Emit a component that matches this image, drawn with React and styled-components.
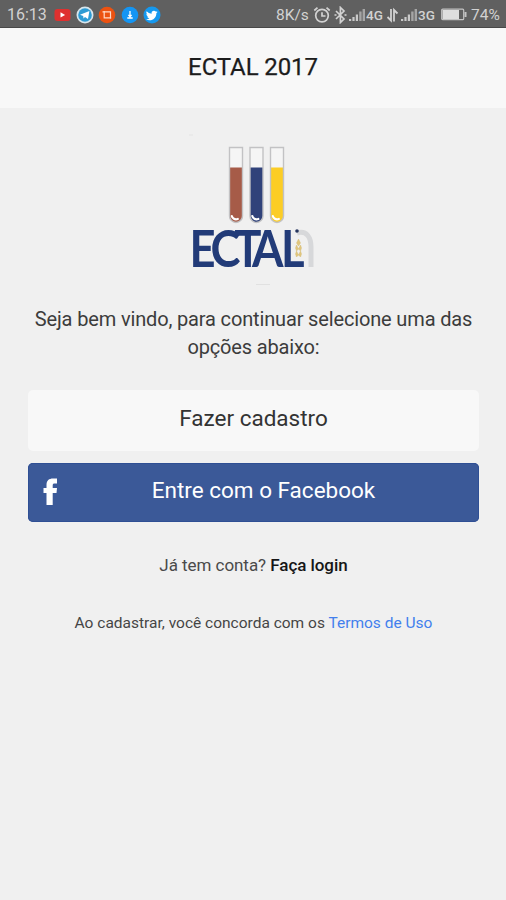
import React from 'react';
import styled, { createGlobalStyle } from 'styled-components';

const GlobalStyle = createGlobalStyle`
  * { box-sizing: border-box; }
  body { margin: 0; background: #f0f0f0; font-family: Roboto, sans-serif; }
`;

const Screen = styled.div`
  width: 506px;
  height: 900px;
  display: flex;
  flex-direction: column;
  background: #f0f0f0;
  overflow: hidden;
`;

const StatusBar = styled.div`
  height: 28px;
  flex: none;
  display: flex;
  align-items: center;
  justify-content: space-between;
  padding: 2px 6px 0 7px;
  background: #606060;
  border-bottom: 1px solid #484848;
  color: #d2d2d2;
`;

const StatusGroup = styled.div`
  display: flex;
  align-items: center;
`;

const StatusText = styled.span`
  font-size: ${(p) => p.$size || 16}px;
  line-height: 20px;
  width: ${(p) => p.$width}px;
  margin-left: ${(p) => p.$gap || 0}px;
  font-weight: ${(p) => p.$weight || 400};
  white-space: nowrap;
`;

const StatusIcon = styled.svg`
  display: block;
  flex: none;
  margin-left: ${(p) => p.$gap || 0}px;
`;

const Header = styled.header`
  height: 80px;
  flex: none;
  display: flex;
  justify-content: center;
  padding-top: 24px;
  background: #f8f8f8;
`;

const Title = styled.h1`
  margin: 0;
  font-size: 24px;
  line-height: 30px;
  font-weight: 400;
  letter-spacing: -0.1px;
  color: #1c1c1c;
  -webkit-text-stroke: 0.25px #1c1c1c;
`;

const Content = styled.main`
  display: flex;
  flex-direction: column;
  align-items: center;
  padding: 22px 27px 0 28px;
`;

const Logo = styled.svg`
  display: block;
  width: 145px;
  height: 160px;
`;

const Welcome = styled.p`
  margin: 15px 0 0;
  font-size: 20px;
  line-height: 28px;
  letter-spacing: -0.15px;
  text-align: center;
  white-space: nowrap;
  color: #3c3c3c;
`;

const Button = styled.button`
  width: 451px;
  height: ${(p) => p.$height}px;
  margin-top: ${(p) => p.$top}px;
  display: grid;
  grid-template-columns: ${(p) => p.$lead || 44}px 1fr 44px;
  align-items: center;
  padding: 0 0 5px;
  border: 0;
  border-radius: 5px;
  background: ${(p) => p.$bg};
  color: ${(p) => p.$color};
  box-shadow: ${(p) => p.$shadow || 'none'};
  font: 400 22.5px/28px Roboto, sans-serif;
`;

const ButtonLabel = styled.span`
  grid-column: 2;
  text-align: center;
`;

const FacebookIcon = styled.svg`
  grid-column: 1;
  grid-row: 1;
  display: block;
  margin: 2px 0 0 15px;
`;

const LoginLine = styled.p`
  margin: 32px 0 0;
  font-size: 17px;
  line-height: 22px;
  letter-spacing: -0.05px;
  color: #4a4a4a;
`;

const LoginLink = styled.a`
  font-weight: 500;
  color: #161616;
`;

const TermsLine = styled.p`
  margin: 37px 0 0;
  font-size: 15.5px;
  line-height: 20px;
  white-space: nowrap;
  color: #454545;
`;

const TermsLink = styled.a`
  color: #427fed;
`;

function YouTubeIcon() {
  return (
    <StatusIcon width="17" height="14" viewBox="0 0 17 14" $gap={7}>
      <rect x="0.5" y="1" width="16" height="12" rx="3" fill="#df302f" />
      <path d="M6.5 4.3v5.2l4.6-2.6z" fill="#fff" />
    </StatusIcon>
  );
}

function TelegramIcon() {
  return (
    <StatusIcon width="18" height="18" viewBox="0 0 18 18" $gap={5}>
      <circle cx="9" cy="9" r="8.5" fill="#d8e5ec" />
      <circle cx="9" cy="9" r="6.8" fill="#2c9bd4" />
      <path d="M4 8.8 13.4 5 12 13l-3-2-1.5 1.5-.3-2.6z" fill="#fff" />
    </StatusIcon>
  );
}

function CropIcon() {
  return (
    <StatusIcon width="18" height="18" viewBox="0 0 18 18" $gap={4}>
      <circle cx="9" cy="9" r="8.3" fill="#ec5211" />
      <path d="M4.5 5.8h8v7M6.2 5v6.8h7" fill="none" stroke="#ffd9c7" strokeWidth="1.2" />
    </StatusIcon>
  );
}

function DownloadIcon() {
  return (
    <StatusIcon width="18" height="18" viewBox="0 0 18 18" $gap={5}>
      <circle cx="9" cy="9" r="8.3" fill="#1495f3" />
      <path d="M9 5v5.6M7.4 8.8 9 10.7l1.6-1.9M6.3 12h5.4" fill="none" stroke="#fff" strokeWidth="1.3" />
    </StatusIcon>
  );
}

function TwitterIcon() {
  return (
    <StatusIcon width="18" height="18" viewBox="0 0 18 18" $gap={4}>
      <circle cx="9" cy="9" r="8.5" fill="#1698ee" />
      <path
        d="M14.6 5.7c-.4.2-.9.4-1.4.4.5-.3.8-.7 1-1.2-.5.3-1 .5-1.5.6a2.4 2.4 0 0 0-4.1 2.2 6.9 6.9 0 0 1-5-2.5 2.4 2.4 0 0 0 .8 3.2c-.4 0-.8-.1-1.1-.3 0 1.2.8 2.2 2 2.4-.4.1-.7.1-1.1 0 .3 1 1.2 1.7 2.3 1.7A5 5 0 0 1 3 13.2c4.8 2.8 10.5-.3 10.4-6.3.5-.3.9-.7 1.2-1.2z"
        fill="#fff"
      />
    </StatusIcon>
  );
}

function AlarmIcon() {
  return (
    <StatusIcon width="18" height="18" viewBox="0 0 18 18" fill="none" stroke="#d2d2d2" strokeWidth="1.7">
      <circle cx="9" cy="9.6" r="6.3" />
      <path d="M9 6.2v3.8h3.5M1.3 4.5 4.5 1.7M13.5 1.7l3.2 2.8" />
    </StatusIcon>
  );
}

function BluetoothIcon() {
  return (
    <StatusIcon width="13" height="18" viewBox="0 0 13 18" $gap={3} fill="none" stroke="#d2d2d2" strokeWidth="1.7">
      <path d="m2 5 8 8-3.6 3.5v-15L10 5l-8 8M.5 9h2M10.5 9h2" />
    </StatusIcon>
  );
}

function SignalIcon({ gap }) {
  return (
    <StatusIcon width="17" height="14" viewBox="0 0 17 14" $gap={gap}>
      <path d="M0 11h2.2v2H0zM3.4 9h2.2v4H3.4zM6.8 6.5H9V13H6.8z" fill="#cacaca" />
      <path d="M10.2 3.5h2.4V13h-2.4zM13.6 1H16v12h-2.4z" fill="#a5a5a5" />
    </StatusIcon>
  );
}

function DataArrowsIcon() {
  return (
    <StatusIcon width="13" height="16" viewBox="0 0 13 16" $gap={1} fill="none" stroke="#d2d2d2" strokeWidth="1.8">
      <path d="M5 2v11.5L1.5 10M8 14.5V3l3.5 3.5" />
    </StatusIcon>
  );
}

function BatteryIcon() {
  return (
    <StatusIcon width="26" height="13" viewBox="0 0 26 13" $gap={4}>
      <rect x="0.7" y="1.2" width="22" height="10.5" rx="1" fill="none" stroke="#c4c4c4" strokeWidth="1.2" />
      <path d="M1.5 2H18v9H1.5z" fill="#dedede" />
      <path d="M23.5 4h2v5h-2z" fill="#c4c4c4" />
    </StatusIcon>
  );
}

function Tube({ x, color }) {
  return (
    <g transform={`translate(${x} 0)`}>
      <path d="M0 17.5h13V86a6.5 6.5 0 0 1-13 0z" fill="#f5f5f5" />
      <path d="M0 37.5h13V86a6.5 6.5 0 0 1-13 0z" fill={color} />
      <path d="M0 17.5h13V86a6.5 6.5 0 0 1-13 0z" fill="none" stroke="#c2c2c4" strokeWidth="1.4" />
      <path d="M2.3 86c.6 2.5 3 4 6 3" fill="none" stroke="#fff" strokeWidth="2.2" strokeLinecap="round" />
    </g>
  );
}

function EctalLogo() {
  return (
    <Logo viewBox="0 0 145 160">
      <path d="M8 5h4" stroke="#e4e4e4" />
      <Tube x={48.5} color="#a65b48" />
      <Tube x={69} color="#30427a" />
      <Tube x={89.5} color="#fccd25" />
      <path
        d="M116 103c10-3 14 5 14 14v20"
        fill="none"
        stroke="#d7d8da"
        strokeWidth="5"
      />
      <text
        transform="translate(8.5 136.5) scale(0.88 1)"
        x="0 24 51 71 104"
        y="0"
        fontFamily="Lato, sans-serif"
        fontSize="51.5"
        fontWeight="700"
        fill="#223b78"
        strokeLinejoin="round"
      >
        ECTAL
      </text>
      <circle cx="116" cy="101" r="1.8" fill="#27365f" />
      <path
        d="m117.500 109 2 4-2 3-2-3zM115.500 115l2 4-2 2-1-3zM119.500 115l-2 4 2 2 1-3zM115.500 121l2 4-2 2-1-3zM119.500 121l-2 4 2 2 1-3z"
        fill="#e2c77d"
        stroke="#cfb56e"
        strokeWidth="0.4"
      />
      <path d="M75 154.500h14" stroke="#e1e1e1" />
    </Logo>
  );
}

export default function App() {
  return (
    <>
      <GlobalStyle />
      <Screen>
        <StatusBar>
          <StatusGroup>
            <StatusText $width={40}>16:13</StatusText>
            <YouTubeIcon />
            <TelegramIcon />
            <CropIcon />
            <DownloadIcon />
            <TwitterIcon />
          </StatusGroup>
          <StatusGroup>
            <StatusText $size={15.5} $width={37}>8K/s</StatusText>
            <AlarmIcon />
            <BluetoothIcon />
            <SignalIcon gap={2} />
            <StatusText $size={13.5} $width={19} $weight={500}>4G</StatusText>
            <DataArrowsIcon />
            <SignalIcon gap={2} />
            <StatusText $size={13.5} $width={19} $weight={500}>3G</StatusText>
            <BatteryIcon />
            <StatusText $size={15.5} $width={29} $gap={4}>74%</StatusText>
          </StatusGroup>
        </StatusBar>
        <Header>
          <Title>ECTAL 2017</Title>
        </Header>
        <Content>
          <EctalLogo />
          <Welcome>
            Seja bem vindo, para continuar selecione uma das
            <br />
            opções abaixo:
          </Welcome>
          <Button $top={29} $height={61} $bg="#f8f8f8" $color="#333">
            <ButtonLabel>Fazer cadastro</ButtonLabel>
          </Button>
          <Button $top={12} $height={59} $bg="#3b5998" $color="#fff" $lead={64} $shadow="inset 0 0 0 1px #2f4f94">
            <FacebookIcon width="16" height="27" viewBox="0 0 16 27">
              <path
                d="M3.5 27V15H.5v-5h3V7C3.500 2.500 6 .5 10 .5h4v5h-2.300c-1.500 0-2 .6-2 1.900V10H14l-.5 5H9.700v12z"
                fill="#fff"
              />
            </FacebookIcon>
            <ButtonLabel>Entre com o Facebook</ButtonLabel>
          </Button>
          <LoginLine>
            Já tem conta? <LoginLink>Faça login</LoginLink>
          </LoginLine>
          <TermsLine>
            Ao cadastrar, você concorda com os <TermsLink>Termos de Uso</TermsLink>
          </TermsLine>
        </Content>
      </Screen>
    </>
  );
}
